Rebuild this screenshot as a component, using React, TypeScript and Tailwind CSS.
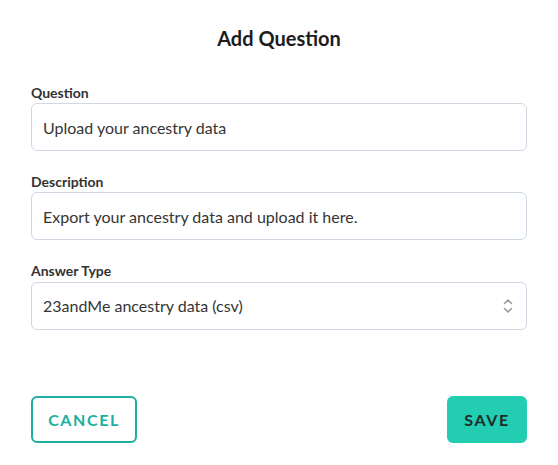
import { useState } from "react";

const fieldBox =
  "h-[48px] w-full rounded-[6px] border border-[#cfd8e3] bg-white px-[11px] text-[16px] text-[#353535] outline-none";

function Field({ label, value }: { label: string; value: string }) {
  const [text, setText] = useState(value);
  return (
    <div className="flex flex-col">
      <label className="text-[14px] font-bold leading-[20px] text-[#333]">{label}</label>
      <input className={fieldBox} value={text} onChange={(e) => setText(e.target.value)} />
    </div>
  );
}

export default function App() {
  return (
    <div className="min-h-screen w-full bg-white font-['Lato',sans-serif]">
      <div className="flex flex-col px-[31px] pt-[24px]">
        <h1 className="text-center text-[20px] font-bold leading-[28px] text-[#1c1c1c]">Add Question</h1>

        <div className="mt-[31px] flex flex-col gap-[21px]">
          <Field label="Question" value="Upload your ancestry data" />
          <Field label="Description" value="Export your ancestry data and upload it here." />

          <div className="flex flex-col">
            <label className="text-[14px] font-bold leading-[20px] text-[#333]">Answer Type</label>
            <div className="relative mt-[1px]">
              <select className={`${fieldBox} appearance-none`} defaultValue="23andme">
                <option value="23andme">23andMe ancestry data (csv)</option>
                <option value="text">Text</option>
              </select>
              <svg
                className="pointer-events-none absolute right-[13px] top-1/2 -translate-y-1/2"
                width="12"
                height="18"
                viewBox="0 0 12 18"
                fill="none"
                stroke="#9a9a9a"
                strokeWidth="1.6"
                strokeLinecap="round"
                strokeLinejoin="round"
              >
                <path d="M2.5 6.5 6 3l3.5 3.5" />
                <path d="M2.5 11.5 6 15l3.5-3.5" />
              </svg>
            </div>
          </div>
        </div>

        <div className="mt-[66px] flex items-center justify-between">
          <button
            type="button"
            className="h-[47px] w-[106px] rounded-[6px] border-2 border-[#1cafa1] text-[16px] font-bold tracking-[0.1em] text-[#1cafa1]"
          >
            CANCEL
          </button>
          <button
            type="button"
            className="h-[47px] w-[80px] rounded-[6px] bg-[#22cdb1] text-[16px] font-bold tracking-[0.1em] text-[#1d2b2a]"
          >
            SAVE
          </button>
        </div>
      </div>
    </div>
  );
}
